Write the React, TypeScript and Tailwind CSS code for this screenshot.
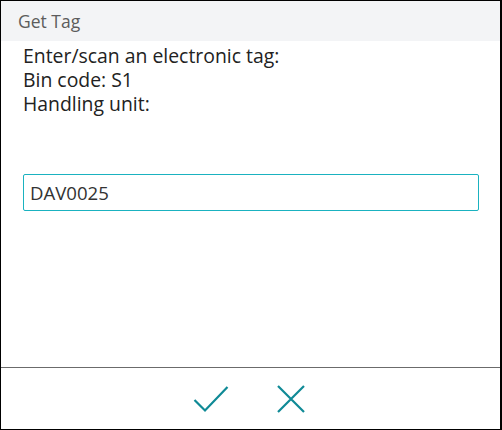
import { useState } from 'react'

export default function App() {
  const [tag, setTag] = useState('DAV0025')

  return (
    <div
      className="w-[502px] h-[430px] flex flex-col bg-white border border-black border-r-2 text-[#222]"
      style={{ fontFamily: '"Open Sans", "Noto Sans", sans-serif' }}
    >
      {/* Title bar */}
      <div className="h-[40px] shrink-0 bg-[#f3f4f6] flex items-center px-[17px] text-[17.5px] text-[#5c5c5c]">
        Get Tag
      </div>

      {/* Body */}
      <div className="flex-1 px-[22px] pt-[3px]">
        <div className="text-[19.4px] leading-[24px]">
          <p>Enter/scan an electronic tag:</p>
          <p>Bin code: S1</p>
          <p>Handling unit:</p>
        </div>
        <input
          value={tag}
          onChange={e => setTag(e.target.value)}
          className="mt-[58px] w-[456px] h-[37px] px-[6px] border border-[#1ab2c0] rounded-[2px] text-[18.6px] text-[#333] outline-none"
        />
      </div>

      {/* Footer */}
      <div className="h-[62px] shrink-0 border-t border-[#6b6b6b] flex justify-center items-center">
        <button className="w-[80px] h-[40px] flex items-center justify-center">
          <svg width="36" height="28" viewBox="0 0 36 28" fill="none">
            <path d="M1.5 15 L12 25.5 L34.5 2" stroke="#0f8a96" strokeWidth="2.2" />
          </svg>
        </button>
        <button className="w-[80px] h-[40px] flex items-center justify-center">
          <svg width="28" height="28" viewBox="0 0 28 28" fill="none">
            <path d="M1 1 L27 27 M27 1 L1 27" stroke="#0f8a96" strokeWidth="2.2" />
          </svg>
        </button>
      </div>
    </div>
  )
}
